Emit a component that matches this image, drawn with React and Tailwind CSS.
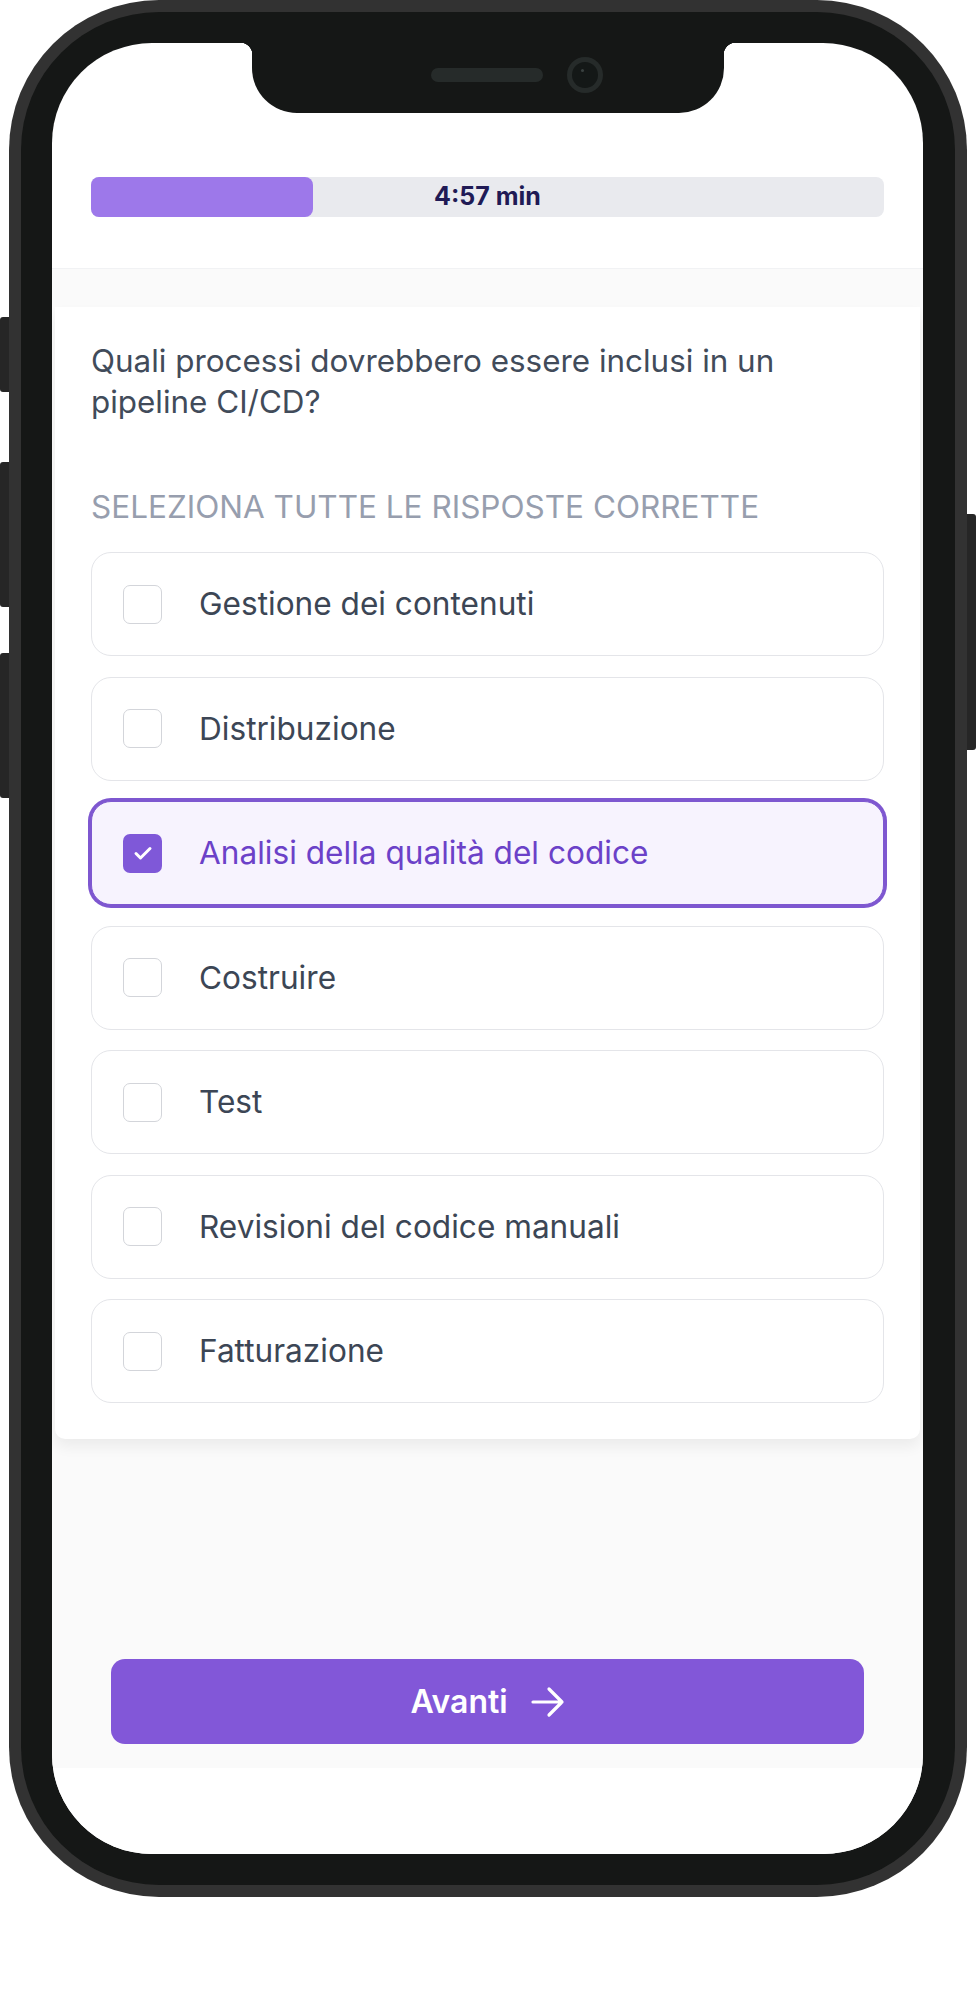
import { useState } from 'react'
import clsx from 'clsx'

const OPTIONS = [
  'Gestione dei contenuti',
  'Distribuzione',
  'Analisi della qualità del codice',
  'Costruire',
  'Test',
  'Revisioni del codice manuali',
  'Fatturazione',
]

function CheckBox({ checked }) {
  return (
    <span
      className={clsx(
        'w-[39px] h-[39px] shrink-0 rounded-[7px] flex items-center justify-center',
        checked ? 'bg-[#7f58d8]' : 'border-[1.5px] border-[#d3d5da] bg-white'
      )}
    >
      {checked && (
        <svg width="24" height="24" viewBox="0 0 24 24" fill="none">
          <path d="M5 12.5l4.5 4.5L19 7.5" stroke="white" strokeWidth="3" strokeLinecap="round" strokeLinejoin="round" />
        </svg>
      )}
    </span>
  )
}

function Option({ label, checked, onToggle }) {
  return (
    <button
      onClick={onToggle}
      className={clsx(
        'w-full h-[104px] rounded-[20px] flex items-center gap-[37px] pl-[31px] text-left border',
        checked
          ? 'border-[#7e57d0] ring-[3px] ring-[#7e57d0] bg-[#f7f3fe] text-[#6b41c8]'
          : 'border-[#e4e5e9] bg-white text-[#3c4655]'
      )}
    >
      <CheckBox checked={checked} />
      <span className="text-[31.6px] leading-[40px]">{label}</span>
    </button>
  )
}

function SideButton({ className }) {
  return <div className={clsx('w-[9px] bg-[#262626]', className)} />
}

export default function App() {
  const [selected, setSelected] = useState([2])

  const toggle = (i) =>
    setSelected((s) => (s.includes(i) ? s.filter((x) => x !== i) : [...s, i]))

  return (
    <div className="flex w-[976px] h-[2004px] bg-white font-['Inter',sans-serif]">
      {/* Left side buttons */}
      <div className="w-[9px] shrink-0 flex flex-col pt-[317px]">
        <SideButton className="h-[75px] rounded-l-[3px]" />
        <SideButton className="mt-[70px] h-[145px] rounded-l-[3px]" />
        <SideButton className="mt-[46px] h-[145px] rounded-l-[3px]" />
      </div>

      {/* Phone frame */}
      <div className="w-[958px] h-[1897px] shrink-0 rounded-[150px] bg-[#323232] p-[12px]">
        <div className="h-full rounded-[138px] bg-[#151716] pt-[31px] pb-[31px] pl-[31px] pr-[32px]">
          <div className="relative h-full rounded-[100px] bg-white overflow-hidden flex flex-col">
            {/* Notch */}
            <div className="absolute top-0 left-[200px] w-[472px] h-[70px] bg-[#151716] rounded-b-[45px] z-10 flex items-start pl-[179px] pt-[14px] gap-[24px]">
              <div className="absolute -left-[12px] top-0 w-[12px] h-[12px] bg-[radial-gradient(circle_at_0_100%,transparent_12px,#151716_12.5px)]" />
              <div className="absolute -right-[12px] top-0 w-[12px] h-[12px] bg-[radial-gradient(circle_at_100%_100%,transparent_12px,#151716_12.5px)]" />
              <div className="mt-[11px] w-[112px] h-[14px] rounded-full bg-[#262b2a]" />
              <div className="w-[36px] h-[36px] rounded-full bg-[#262b2a] p-[5px]">
                <div className="w-full h-full rounded-full bg-[#141817] pl-[9px] pt-[7px]">
                  <div className="w-[3px] h-[3px] rounded-full bg-[#3a4140]" />
                </div>
              </div>
            </div>

            {/* Timer */}
            <div className="h-[225px] shrink-0 px-[39px] pt-[134px]">
              <div className="grid h-[40px] rounded-[8px] bg-[#e9eaee]">
                <div className="[grid-area:1/1] w-[222px] h-full rounded-[8px] bg-[#9d78ea]" />
                <span className="[grid-area:1/1] flex items-center justify-center text-[25px] font-bold text-[#201a55]">
                  4:57 min
                </span>
              </div>
            </div>

            {/* Question area */}
            <div className="h-[1500px] shrink-0 border-t border-[#f1f2f4] bg-[#fafafa] flex flex-col pt-[38px]">
              <div className="mx-[3px] bg-white rounded-b-[10px] shadow-[0_8px_14px_rgba(0,0,0,0.06)] px-[36px] pt-[34px] pb-[36px]">
                <p className="text-[31.4px] leading-[41px] text-[#414b5a]">
                  Quali processi dovrebbero essere inclusi in un pipeline CI/CD?
                </p>
                <p className="mt-[63px] text-[31.5px] leading-[41px] uppercase text-[#979eae]">
                  Seleziona tutte le risposte corrette
                </p>
                <div className="mt-[25px] flex flex-col gap-[20.5px]">
                  {OPTIONS.map((o, i) => (
                    <Option key={o} label={o} checked={selected.includes(i)} onToggle={() => toggle(i)} />
                  ))}
                </div>
              </div>

              <div className="mt-auto px-[59px] pb-[24px]">
                <button className="w-full h-[85px] rounded-[14px] bg-[#8257d8] flex items-center justify-center gap-[23px] text-white">
                  <span className="text-[32px] font-semibold">Avanti</span>
                  <svg width="34" height="34" viewBox="0 0 34 34" fill="none">
                    <path d="M2 17h29M18 4l13 13-13 13" stroke="white" strokeWidth="3.2" strokeLinecap="round" strokeLinejoin="round" />
                  </svg>
                </button>
              </div>
            </div>

            <div className="flex-1 bg-white" />
          </div>
        </div>
      </div>

      {/* Right side button */}
      <div className="w-[9px] shrink-0 pt-[514px]">
        <SideButton className="h-[236px] rounded-r-[3px]" />
      </div>
    </div>
  )
}
